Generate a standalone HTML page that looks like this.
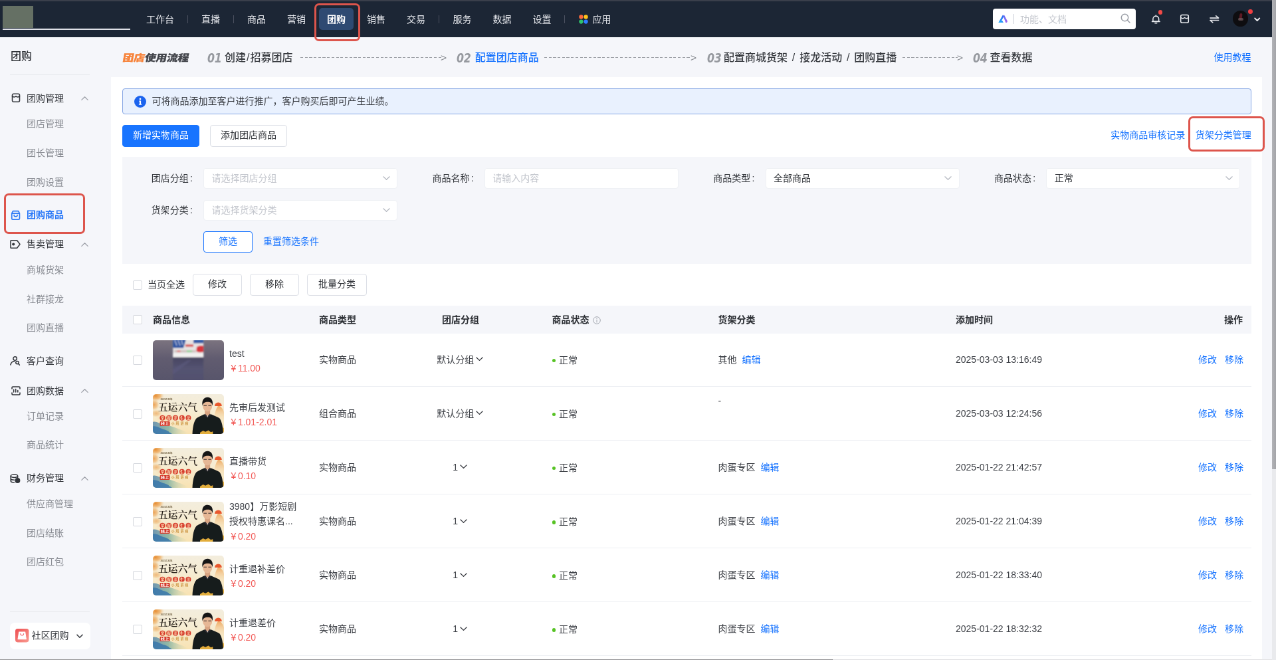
<!DOCTYPE html><html lang="zh-CN"><head><meta charset="utf-8"><title>团购商品</title><style>
*{box-sizing:border-box;margin:0;padding:0}
html,body{width:1276px;height:660px;overflow:hidden;background:#f5f6fa}
body{font-family:"Liberation Sans","Noto Sans CJK SC",sans-serif;color:#333;position:relative}
#root{will-change:transform;position:absolute;left:0;top:0;width:1920px;height:993px;transform:scale(0.664583);transform-origin:0 0;background:#f5f6fa;overflow:hidden;font-size:14px}
.t{position:absolute;white-space:nowrap;line-height:1;transform:translateY(-50%)}
.b{position:absolute}
.nav{color:#e3e5ea;font-size:14px}
.sub{color:#8a8d94;font-size:14px}
.grp{color:#34373c;font-size:14px;font-weight:400}
.blue{color:#1874ff}
.ph{color:#c3c6cd}
.th{font-weight:700;color:#2b2e33}
.red{color:#f25b58}.g{display:inline-block;width:2.6px}
.btn{border:1px solid #dcdfe6;border-radius:4px;background:#fff;display:flex;align-items:center;justify-content:center;font-size:14px;color:#2f3237;line-height:1;padding-bottom:2.4px}
.inp{border:1px solid #eef0f4;border-radius:4px;background:#fff}
.cb{border:1px solid #d5d8de;border-radius:2px;background:#fff}
.redbox{border:3px solid #dd554c;border-radius:7px}
svg{position:absolute;overflow:visible}
</style></head><body><div id="root">
<div class="b " style="left:0.00px;top:0.00px;width:1920.00px;height:56.00px;background:#1c2635"></div>
<div class="b " style="left:0.00px;top:0.00px;width:1920.00px;height:1.50px;background:#3a3f4b"></div>
<div class="b " style="left:3.80px;top:9.00px;width:45.80px;height:32.90px;background:#657064"></div>
<div class="b " style="left:3.80px;top:42.60px;width:192.40px;height:2.80px;background:#dfe1e8"></div>
<div class="t nav" style="left:220.00px;top:29.30px;">工作台</div>
<div class="t nav" style="left:303.00px;top:29.30px;">直播</div>
<div class="t nav" style="left:372.00px;top:29.30px;">商品</div>
<div class="t nav" style="left:432.00px;top:29.30px;">营销</div>
<div class="t nav" style="left:552.00px;top:29.30px;">销售</div>
<div class="t nav" style="left:612.00px;top:29.30px;">交易</div>
<div class="t nav" style="left:681.50px;top:29.30px;">服务</div>
<div class="t nav" style="left:741.50px;top:29.30px;">数据</div>
<div class="t nav" style="left:801.50px;top:29.30px;">设置</div>
<div class="t nav" style="left:891.50px;top:29.30px;">应用</div>
<div class="b " style="left:480.00px;top:12.00px;width:52.00px;height:33.00px;background:#2e4a72;border-radius:5px"></div>
<div class="t nav" style="left:492.00px;top:29.30px;color:#fff;font-weight:700">团购</div>
<div class="b " style="left:281.50px;top:22.50px;width:1.20px;height:12.00px;background:#4b5160"></div>
<div class="b " style="left:350.50px;top:22.50px;width:1.20px;height:12.00px;background:#4b5160"></div>
<div class="b " style="left:660.00px;top:22.50px;width:1.20px;height:12.00px;background:#4b5160"></div>
<div class="b " style="left:848.50px;top:22.50px;width:1.20px;height:12.00px;background:#4b5160"></div>
<svg style="left:871px;top:21.5px" width="14" height="14" viewBox="0 0 14 14"><circle cx="3.4" cy="3.4" r="3.1" fill="#ff6a3d"/><circle cx="10.6" cy="3.4" r="3.1" fill="#ffc21a"/><circle cx="3.4" cy="10.6" r="3.1" fill="#2ec36b"/><circle cx="10.6" cy="10.6" r="3.1" fill="#2f7bff"/></svg>
<div class="b " style="left:1493.60px;top:12.70px;width:215.40px;height:31.50px;background:#fff;border-radius:4px"></div>
<svg style="left:1502.4px;top:22px" width="14.3" height="12.3" viewBox="0 0 14.3 12.3"><defs><linearGradient id="lg1" x1="0" y1="1" x2=".7" y2="0"><stop offset="0" stop-color="#1fb4ff"/><stop offset="1" stop-color="#2f68ee"/></linearGradient><linearGradient id="lg1b" x1="0" y1="0" x2="1" y2="1"><stop offset="0" stop-color="#5a70f4"/><stop offset="1" stop-color="#a862ee"/></linearGradient></defs><path d="M6.9 0.4 L0.3 12 H7.9 L6.3 9.2 H4.9 L8.4 3 Z" fill="url(#lg1)"/><path d="M7.4 1.4 L9 0.6 L14 10 L13 12 H11.2 Z" fill="url(#lg1b)"/></svg>
<div class="b " style="left:1525.00px;top:21.00px;width:1.00px;height:15.00px;background:#e3e5ea"></div>
<div class="t ph" style="left:1535.00px;top:29.30px;">功能、文档</div>
<svg style="left:1685.6px;top:20.2px" width="15" height="15" viewBox="0 0 15 15" fill="none" stroke="#9a9ea6" stroke-width="1.5"><circle cx="6.5" cy="6.5" r="5.2"/><path d="M10.4 10.4 L14 14" stroke-linecap="round"/></svg>
<svg style="left:1731.6px;top:21.6px" width="14.6" height="14.6" viewBox="0 0 16 16" fill="none" stroke="#eceef2" stroke-width="1.6" stroke-linejoin="round" stroke-linecap="round"><path d="M3.2 11.2 V7.2 a4.8 4.8 0 0 1 9.6 0 V11.2 Z"/><path d="M1.6 11.4 H14.4"/><path d="M6.4 14 H9.6"/><path d="M8 1.2 V2.2"/></svg>
<div class="b " style="left:1742.60px;top:15.40px;width:6.60px;height:6.60px;background:#f24a47;border-radius:50%"></div>
<svg style="left:1775.4px;top:21.4px" width="15" height="15" viewBox="0 0 16 16" fill="none" stroke="#eceef2" stroke-width="1.6" stroke-linejoin="round"><rect x="1.8" y="1.6" width="12.4" height="12.6" rx="2.2"/><path d="M1.8 5.6 Q4.9 8.6 8 5.8 Q11.1 8.6 14.2 5.6"/></svg>
<svg style="left:1819.6px;top:22.8px" width="14.6" height="11.6" viewBox="0 0 15.6 12.4" fill="none" stroke="#e6e8ec" stroke-width="1.7" stroke-linejoin="round" stroke-linecap="round"><path d="M1 4.4 H14.6 L10.4 0.9"/><path d="M14.6 8.1 H1 L5.2 11.6"/></svg>
<div class="b " style="left:1855.10px;top:16.30px;width:23.40px;height:23.40px;background:#0e0d10;border-radius:50%;overflow:hidden"><div style="position:absolute;left:9.5px;top:4px;width:4px;height:10px;background:#5e1a24;border-radius:3px;transform:rotate(8deg)"></div><div style="position:absolute;left:7.5px;top:10.5px;width:8px;height:4.5px;background:#6d5a5c;border-radius:2px;opacity:.75"></div></div>
<div class="b " style="left:1878.40px;top:14.20px;width:6.80px;height:6.80px;background:#ee3f42;border-radius:50%"></div>
<svg style="left:1887.4px;top:25.6px" width="9.4" height="7" viewBox="0 0 9.4 7" fill="none" stroke="#f4f5f7" stroke-width="1.8" stroke-linecap="round" stroke-linejoin="round"><path d="M1.1 1.4 L4.7 5 L8.3 1.4"/></svg>
<div class="b redbox" style="left:473.20px;top:4.60px;width:69.20px;height:57.40px;"></div>
<div class="t " style="left:16.00px;top:85.30px;font-size:16px;font-weight:500;color:#2f3237">团购</div>
<div class="b " style="left:14.80px;top:112.40px;width:120.40px;height:1.00px;background:#e6e8ec"></div>
<svg style="left:16.6px;top:140.3px" width="14" height="14.5" viewBox="0 0 14 14.5" fill="none" stroke="#33363b" stroke-width="1.55" stroke-linejoin="round" stroke-linecap="round"><rect x="1.5" y="1.2" width="11" height="12.1" rx="2"/><path d="M1.5 4.6 Q4.2 7.4 7 4.8 Q9.8 7.4 12.5 4.6"/></svg>
<div class="t grp" style="left:40.00px;top:147.50px;">团购管理</div>
<svg style="left:122px;top:145px" width="11" height="6" viewBox="0 0 11 6" fill="none" stroke="#9a9da5" stroke-width="1.2" stroke-linecap="round" stroke-linejoin="round"><path d="M0.8 5.4 L5.5 0.8 L10.2 5.4"/></svg>
<div class="t sub" style="left:40.00px;top:185.90px;">团店管理</div>
<div class="t sub" style="left:40.00px;top:229.70px;">团长管理</div>
<div class="t sub" style="left:40.00px;top:273.70px;">团购设置</div>
<svg style="left:15.6px;top:316.2px" width="15.2" height="15.7" viewBox="0 0 14 14.5" fill="none" stroke="#2d7af6" stroke-width="1.55" stroke-linejoin="round" stroke-linecap="round"><path d="M1.6 4.8 L3.2 1.5 H10.8 L12.4 4.8 V11.9 a1.3 1.3 0 0 1 -1.3 1.3 H2.9 a1.3 1.3 0 0 1 -1.3 -1.3 Z M1.6 4.8 H12.4"/><path d="M4.7 6.9 a2.3 2.3 0 0 0 4.6 0"/></svg>
<div class="t grp" style="left:40.00px;top:323.20px;color:#2676f8;font-weight:700">团购商品</div>
<div class="b redbox" style="left:5.50px;top:290.90px;width:122.00px;height:61.60px;"></div>
<svg style="left:15.4px;top:361.2px" width="16" height="13" viewBox="0 0 16 13" fill="none" stroke="#33363b" stroke-width="1.55" stroke-linejoin="round" stroke-linecap="round"><path d="M1 1.6 a.8 .8 0 0 1 .8 -.8 H10.6 L15 6.5 L10.6 12.2 H1.8 a.8 .8 0 0 1 -.8 -.8 Z"/><circle cx="5.2" cy="6.5" r="2.1" fill="#33363b" stroke="none"/></svg>
<div class="t grp" style="left:40.00px;top:367.20px;">售卖管理</div>
<svg style="left:122px;top:364.8px" width="11" height="6" viewBox="0 0 11 6" fill="none" stroke="#9a9da5" stroke-width="1.2" stroke-linecap="round" stroke-linejoin="round"><path d="M0.8 5.4 L5.5 0.8 L10.2 5.4"/></svg>
<div class="t sub" style="left:40.00px;top:406.00px;">商城货架</div>
<div class="t sub" style="left:40.00px;top:449.70px;">社群接龙</div>
<div class="t sub" style="left:40.00px;top:493.40px;">团购直播</div>
<svg style="left:15.4px;top:536px" width="15" height="14" viewBox="0 0 15 14" fill="none" stroke="#33363b" stroke-width="1.55" stroke-linejoin="round" stroke-linecap="round"><circle cx="7.6" cy="3.5" r="2.7"/><path d="M0.9 13 C1.6 9.6 4 7.8 7 7.6"/><circle cx="11" cy="9.6" r="2.2"/><path d="M12.6 11.2 L14.4 13.2"/></svg>
<div class="t grp" style="left:40.00px;top:543.30px;">客户查询</div>
<svg style="left:16.5px;top:580.6px" width="14" height="14" viewBox="0 0 14 14" fill="none" stroke="#33363b" stroke-width="1.55" stroke-linejoin="round" stroke-linecap="round"><path d="M1 4 V2.2 a1.2 1.2 0 0 1 1.2 -1.2 H11.8 a1.2 1.2 0 0 1 1.2 1.2 V4 M1 10 V11.8 a1.2 1.2 0 0 0 1.2 1.2 H11.8 a1.2 1.2 0 0 0 1.2 -1.2 V10"/><path d="M3.6 5.2 V9 M6.7 4.4 V9 M9.8 6.6 V9"/></svg>
<div class="t grp" style="left:40.00px;top:587.70px;">团购数据</div>
<svg style="left:122px;top:585.3px" width="11" height="6" viewBox="0 0 11 6" fill="none" stroke="#9a9da5" stroke-width="1.2" stroke-linecap="round" stroke-linejoin="round"><path d="M0.8 5.4 L5.5 0.8 L10.2 5.4"/></svg>
<div class="t sub" style="left:40.00px;top:625.70px;">订单记录</div>
<div class="t sub" style="left:40.00px;top:669.40px;">商品统计</div>
<svg style="left:15.3px;top:712.6px" width="16" height="14" viewBox="0 0 16 14" fill="none" stroke="#33363b" stroke-width="1.55" stroke-linejoin="round" stroke-linecap="round"><ellipse cx="6.4" cy="3.2" rx="5.2" ry="2.2"/><path d="M1.2 3.2 V10.4 C1.2 11.8 3.6 12.8 6.4 12.8 M11.6 3.2 V6.4 M1.2 6.8 C1.2 8.2 3.6 9.2 6.4 9.2"/><circle cx="11.4" cy="10" r="3.2" fill="#2f3237"/></svg>
<div class="t grp" style="left:40.00px;top:719.00px;">财务管理</div>
<svg style="left:122px;top:716.6px" width="11" height="6" viewBox="0 0 11 6" fill="none" stroke="#9a9da5" stroke-width="1.2" stroke-linecap="round" stroke-linejoin="round"><path d="M0.8 5.4 L5.5 0.8 L10.2 5.4"/></svg>
<div class="t sub" style="left:40.00px;top:757.70px;">供应商管理</div>
<div class="t sub" style="left:40.00px;top:801.70px;">团店结账</div>
<div class="t sub" style="left:40.00px;top:845.40px;">团店红包</div>
<div class="b " style="left:14.80px;top:920.30px;width:120.40px;height:1.00px;background:#e8eaee"></div>
<div class="b " style="left:15.20px;top:936.60px;width:121.00px;height:40.60px;background:#fff;border-radius:7px"></div>
<svg style="left:22.8px;top:946.3px" width="20.4" height="20.4" viewBox="0 0 20 20"><defs><linearGradient id="lg2" x1="0" y1="0" x2="1" y2="1"><stop offset="0" stop-color="#ee4f52"/><stop offset="1" stop-color="#f99a90"/></linearGradient></defs><rect width="20" height="20" rx="3.5" fill="url(#lg2)"/><path d="M5.6 4.8 H14.4 L16 15.4 H4 Z" fill="#fff" stroke="#fff" stroke-width="1" stroke-linejoin="round"/><path d="M7.6 7.4 a2.4 2.4 0 0 0 4.8 0" fill="none" stroke="#f2606a" stroke-width="1.1" stroke-linecap="round"/></svg>
<div class="t grp" style="left:47.50px;top:956.20px;">社区团购</div>
<svg style="left:114.5px;top:953.5px" width="10" height="7" viewBox="0 0 10 7" fill="none" stroke="#3a3d43" stroke-width="1.6" stroke-linecap="round" stroke-linejoin="round"><path d="M1 1.2 L5 5.2 L9 1.2"/></svg>
<div class="t" style="left:185px;top:87.3px;font-family:'Liberation Sans','Noto Sans CJK SC',sans-serif;font-weight:900;font-size:14px;transform-origin:0 50%;transform:translateY(-50%) scaleX(1.19) skewX(-9deg);color:#43454b;letter-spacing:-0.1px;-webkit-text-stroke:.3px currentColor"><span style="color:#f7833a">团店</span>使用流程</div>
<div class="t" style="left:311.5px;top:87.6px;font-family:'DejaVu Sans','Liberation Sans',sans-serif;font-size:19.6px;font-style:italic;font-weight:700;color:#96999f;letter-spacing:-0.4px;transform-origin:0 50%;transform:translateY(-50%) scaleX(.81)">01</div>
<div class="t " style="left:338.00px;top:87.40px;font-size:16px;font-weight:500;color:#383b40">创建<span style="padding:0 1px">/</span>招募团店</div>
<div class="b " style="left:452.00px;top:85.70px;width:212.00px;height:1.50px;background:repeating-linear-gradient(90deg,#9b9ea4 0 4.2px,transparent 4.2px 6.7px)"></div>
<div class="t " style="left:663.40px;top:86.00px;font-size:15px;color:#85888e;transform:translateY(-50%) scaleX(1.05);transform-origin:0 50%">&gt;</div>
<div class="t" style="left:687.0px;top:87.6px;font-family:'DejaVu Sans','Liberation Sans',sans-serif;font-size:19.6px;font-style:italic;font-weight:700;color:#96999f;letter-spacing:-0.4px;transform-origin:0 50%;transform:translateY(-50%) scaleX(.81)">02</div>
<div class="t " style="left:714.70px;top:87.40px;font-size:16px;font-weight:500;color:#1874ff">配置团店商品</div>
<div class="b " style="left:819.00px;top:85.70px;width:220.50px;height:1.50px;background:repeating-linear-gradient(90deg,#9b9ea4 0 4.2px,transparent 4.2px 6.7px)"></div>
<div class="t " style="left:1038.90px;top:86.00px;font-size:15px;color:#85888e;transform:translateY(-50%) scaleX(1.05);transform-origin:0 50%">&gt;</div>
<div class="t" style="left:1063.5px;top:87.6px;font-family:'DejaVu Sans','Liberation Sans',sans-serif;font-size:19.6px;font-style:italic;font-weight:700;color:#96999f;letter-spacing:-0.4px;transform-origin:0 50%;transform:translateY(-50%) scaleX(.81)">03</div>
<div class="t " style="left:1089.00px;top:87.40px;font-size:16px;font-weight:500;color:#383b40;word-spacing:2.4px">配置商城货架 / 接龙活动 / 团购直播</div>
<div class="b " style="left:1358.00px;top:85.70px;width:83.00px;height:1.50px;background:repeating-linear-gradient(90deg,#9b9ea4 0 4.2px,transparent 4.2px 6.7px)"></div>
<div class="t " style="left:1440.40px;top:86.00px;font-size:15px;color:#85888e;transform:translateY(-50%) scaleX(1.05);transform-origin:0 50%">&gt;</div>
<div class="t" style="left:1463.5px;top:87.6px;font-family:'DejaVu Sans','Liberation Sans',sans-serif;font-size:19.6px;font-style:italic;font-weight:700;color:#96999f;letter-spacing:-0.4px;transform-origin:0 50%;transform:translateY(-50%) scaleX(.81)">04</div>
<div class="t " style="left:1489.60px;top:87.40px;font-size:16px;font-weight:500;color:#383b40">查看数据</div>
<div class="t blue" style="left:1826.40px;top:86.20px;">使用教程</div>
<div class="b " style="left:167.00px;top:116.00px;width:1732.00px;height:900.00px;background:#fff"></div>
<div class="b " style="left:184.00px;top:132.60px;width:1699.00px;height:39.60px;background:#e9f1fe;border:1.5px solid #86a6e4;border-radius:4px"></div>
<svg style="left:201.5px;top:143.6px" width="18" height="18" viewBox="0 0 18 18"><circle cx="9" cy="9" r="9" fill="#1b63ee"/><circle cx="9" cy="4.9" r="1.35" fill="#fff"/><path d="M7.2 7.6 H10.1 V12.6 H11.2 V13.8 H6.9 V12.6 H8 V8.8 H7.2 Z" fill="#fff"/></svg>
<div class="t " style="left:228.60px;top:151.50px;color:#3a3d43">可将商品添加至客户进行推广，客户购买后即可产生业绩。</div>
<div class="b btn" style="left:184.00px;top:188.10px;width:116.00px;height:32.50px;background:#1874ff;border-color:#1874ff;color:#fff">新增实物商品</div>
<div class="b btn" style="left:316.00px;top:188.10px;width:116.00px;height:32.50px;">添加团店商品</div>
<div class="t blue" style="left:1671.20px;top:203.40px;">实物商品审核记录</div>
<div class="t blue" style="left:1798.70px;top:203.40px;">货架分类管理</div>
<div class="b redbox" style="left:1787.50px;top:175.30px;width:115.60px;height:52.60px;"></div>
<div class="b " style="left:184.00px;top:236.00px;width:1699.00px;height:161.00px;background:#f5f6fa"></div>
<div class="t " style="right:1630.00px;top:267.80px;color:#34373c">团店分组<span style="padding-left:2.4px">:</span></div>
<div class="b inp" style="left:306.00px;top:253.40px;width:292.00px;height:30.30px;"></div>
<div class="t ph" style="left:318.60px;top:267.80px;">请选择团店分组</div>
<svg style="left:575.5px;top:265.3px" width="11" height="6" viewBox="0 0 11 6" fill="none" stroke="#b4b8c0" stroke-width="1.2" stroke-linecap="round" stroke-linejoin="round"><path d="M0.8 0.8 L5.5 5.3 L10.2 0.8"/></svg>
<div class="t " style="right:1207.25px;top:267.80px;color:#34373c">商品名称<span style="padding-left:2.4px">:</span></div>
<div class="b inp" style="left:728.75px;top:253.40px;width:292.00px;height:30.30px;"></div>
<div class="t ph" style="left:741.35px;top:267.80px;">请输入内容</div>
<div class="t " style="right:784.50px;top:267.80px;color:#34373c">商品类型<span style="padding-left:2.4px">:</span></div>
<div class="b inp" style="left:1151.50px;top:253.40px;width:292.00px;height:30.30px;"></div>
<div class="t " style="left:1164.10px;top:267.80px;color:#2f3237">全部商品</div>
<svg style="left:1421.0px;top:265.3px" width="11" height="6" viewBox="0 0 11 6" fill="none" stroke="#b4b8c0" stroke-width="1.2" stroke-linecap="round" stroke-linejoin="round"><path d="M0.8 0.8 L5.5 5.3 L10.2 0.8"/></svg>
<div class="t " style="right:361.75px;top:267.80px;color:#34373c">商品状态<span style="padding-left:2.4px">:</span></div>
<div class="b inp" style="left:1574.25px;top:253.40px;width:292.00px;height:30.30px;"></div>
<div class="t " style="left:1586.85px;top:267.80px;color:#2f3237">正常</div>
<svg style="left:1843.75px;top:265.3px" width="11" height="6" viewBox="0 0 11 6" fill="none" stroke="#b4b8c0" stroke-width="1.2" stroke-linecap="round" stroke-linejoin="round"><path d="M0.8 0.8 L5.5 5.3 L10.2 0.8"/></svg>
<div class="t " style="right:1630.00px;top:315.80px;color:#34373c">货架分类<span style="padding-left:2.4px">:</span></div>
<div class="b inp" style="left:306.00px;top:301.40px;width:292.00px;height:30.30px;"></div>
<div class="t ph" style="left:318.60px;top:315.80px;">请选择货架分类</div>
<svg style="left:575.5px;top:313.3px" width="11" height="6" viewBox="0 0 11 6" fill="none" stroke="#b4b8c0" stroke-width="1.2" stroke-linecap="round" stroke-linejoin="round"><path d="M0.8 0.8 L5.5 5.3 L10.2 0.8"/></svg>
<div class="b btn" style="left:306.00px;top:348.00px;width:74.00px;height:32.00px;border-color:#1874ff;color:#1874ff">筛选</div>
<div class="t blue" style="left:396.00px;top:363.20px;">重置筛选条件</div>
<div class="b cb" style="left:200.00px;top:421.50px;width:14.00px;height:14.00px;"></div>
<div class="t " style="left:222.00px;top:427.50px;color:#2f3237">当页全选</div>
<div class="b btn" style="left:290.00px;top:412.20px;width:74.00px;height:32.50px;">修改</div>
<div class="b btn" style="left:376.00px;top:412.20px;width:74.00px;height:32.50px;">移除</div>
<div class="b btn" style="left:462.00px;top:412.20px;width:90.00px;height:32.50px;">批量分类</div>
<div class="b " style="left:184.00px;top:460.00px;width:1699.00px;height:42.00px;background:#f5f6fa"></div>
<div class="b cb" style="left:200.00px;top:474.00px;width:14.00px;height:14.00px;"></div>
<div class="t th" style="left:230.00px;top:480.50px;">商品信息</div>
<div class="t th" style="left:480.00px;top:480.50px;">商品类型</div>
<div class="t th" style="left:665.00px;top:480.50px;">团店分组</div>
<div class="t th" style="left:830.50px;top:480.50px;">商品状态</div>
<svg style="left:891.5px;top:475.5px" width="12" height="12" viewBox="0 0 12 12" fill="none" stroke="#a4a8b0" stroke-width="1"><circle cx="6" cy="6" r="5.3"/><path d="M6 5.2 V9" stroke-linecap="round"/><circle cx="6" cy="3.3" r=".7" fill="#a4a8b0" stroke="none"/></svg>
<div class="t th" style="left:1080.50px;top:480.50px;">货架分类</div>
<div class="t th" style="left:1438.00px;top:480.50px;">添加时间</div>
<div class="t th" style="right:50.00px;top:480.50px;">操作</div>
<div class="b " style="left:184.00px;top:581.00px;width:1699.00px;height:1.00px;background:#edeff3"></div>
<div class="b cb" style="left:200.00px;top:534.50px;width:14.00px;height:14.00px;"></div>
<div class="b " style="left:229.60px;top:511.90px;width:107.00px;height:60.00px;border-radius:5px;overflow:hidden"><svg width="107" height="60" viewBox="0 0 107 60" style="position:absolute;left:0;top:0">
<defs><linearGradient id="t1a" x1="0" y1="0" x2="0" y2="1"><stop offset="0" stop-color="#7b737f"/><stop offset=".45" stop-color="#615c70"/><stop offset="1" stop-color="#58556b"/></linearGradient>
<linearGradient id="t1b" x1="0" y1="0" x2="0" y2="1"><stop offset="0" stop-color="#46445e"/><stop offset=".5" stop-color="#545372"/><stop offset="1" stop-color="#51506d"/></linearGradient>
<filter id="t1f" x="-5%" y="-5%" width="110%" height="110%"><feGaussianBlur stdDeviation=".8"/></filter></defs>
<rect width="107" height="60" fill="url(#t1a)"/>
<g filter="url(#t1f)">
<rect x="30.2" y="23" width="46" height="39" fill="url(#t1b)"/>
<path d="M30.2 44 L52 30 L58 30 L30.2 52 Z" fill="#5c5b80" opacity=".55"/>
<rect x="30.2" y="-2" width="46" height="27.4" fill="#e6e3e3"/>
<path d="M30.2 -2 H50 L46 11.5 H30.2 Z" fill="#2a52a0"/><rect x="61" y="-2" width="15.2" height="6.4" fill="#3059a6"/>
<path d="M33 0 l3 8 M38 0 l3 8 M43 0 l2 7" stroke="#c9d3ea" stroke-width="1.1"/>
<rect x="49" y="6.4" width="12" height="3.2" fill="#d8484a"/>
<path d="M66 10 Q71 7 76.2 8.6 V17.6 Q70 19.4 65.4 16.4 Z" fill="#d9363c"/>
<rect x="32.5" y="15.3" width="32" height="2.6" fill="#cbbcb8"/><rect x="51" y="15.3" width="8" height="2.6" fill="#8fd494"/><rect x="36.5" y="15.3" width="5" height="2.6" fill="#e27878"/>
<rect x="30.2" y="19.6" width="46" height="5.8" fill="#f3f2f1"/>
</g>
</svg></div>
<div class="t " style="left:345.00px;top:532.20px;color:#3c3f45">test</div>
<div class="t red" style="left:347.50px;top:553.60px;">¥<i class="g"></i>11.00</div>
<div class="t " style="left:480.00px;top:540.70px;color:#3c3f45">实物商品</div>
<div class="t" style="left:592px;width:200px;text-align:center;top:541.0px;color:#3c3f45">默认分组<svg style="position:static;display:inline-block;vertical-align:middle;margin-left:2.5px;margin-top:-3px" width="11" height="7" viewBox="0 0 11 7" fill="none" stroke="#33363c" stroke-width="1.3" stroke-linecap="round" stroke-linejoin="round"><path d="M1 1 L5.5 5.4 L10 1"/></svg></div>
<div class="b " style="left:830.50px;top:539.90px;width:5.40px;height:5.40px;background:#56c223;border-radius:50%"></div>
<div class="t " style="left:841.00px;top:541.90px;color:#3c3f45">正常</div>
<div class="t " style="left:1080.50px;top:540.70px;color:#3c3f45">其他<span class="blue" style="margin-left:8px">编辑</span></div>
<div class="t " style="left:1438.00px;top:540.70px;color:#3c3f45">2025-03-03 13:16:49</div>
<div class="t blue" style="left:1803.00px;top:540.70px;">修改</div>
<div class="t blue" style="left:1843.00px;top:540.70px;">移除</div>
<div class="b " style="left:184.00px;top:662.10px;width:1699.00px;height:1.00px;background:#edeff3"></div>
<div class="b cb" style="left:200.00px;top:615.60px;width:14.00px;height:14.00px;"></div>
<div class="b " style="left:229.60px;top:593.00px;width:107.00px;height:60.00px;border-radius:5px;overflow:hidden"><svg width="107" height="60" viewBox="0 0 107 60" style="position:absolute;left:0;top:0">
<defs><linearGradient id="p1a" x1="0" y1="0" x2="0" y2="1"><stop offset="0" stop-color="#f3eddd"/><stop offset=".45" stop-color="#f6ecd2"/><stop offset="1" stop-color="#f8e2b2"/></linearGradient>
<linearGradient id="p1w" x1="0" y1="0" x2="1" y2="0"><stop offset="0" stop-color="#3774a8"/><stop offset=".42" stop-color="#66a69c"/><stop offset="1" stop-color="#e4e4bc" stop-opacity="0"/></linearGradient>
<linearGradient id="p1m" x1="0" y1="0" x2="0" y2="1"><stop offset="0" stop-color="#ee9744"/><stop offset="1" stop-color="#f6dca8" stop-opacity=".15"/></linearGradient>
<radialGradient id="p1o"><stop offset="0" stop-color="#e88d33"/><stop offset=".55" stop-color="#eda95a" stop-opacity=".75"/><stop offset="1" stop-color="#f2c88e" stop-opacity="0"/></radialGradient>
<filter id="p1f" x="-5%" y="-5%" width="110%" height="110%"><feGaussianBlur stdDeviation=".4"/></filter></defs>
<rect width="107" height="60" fill="url(#p1a)"/>
<g filter="url(#p1f)">
<ellipse cx="4" cy="2.5" rx="13" ry="8.5" fill="url(#p1o)"/>
<ellipse cx="2" cy="16" rx="8" ry="9" fill="url(#p1o)" opacity=".75"/>
<ellipse cx="5" cy="29" rx="9" ry="6" fill="url(#p1o)" opacity=".55"/>
<ellipse cx="20" cy="36" rx="16" ry="5" fill="url(#p1o)" opacity=".3"/>
<path d="M0 42 C5 40 10 45 18 46 C28 47.5 36 52 46 55 L56 60 H0 Z" fill="url(#p1w)" opacity=".7"/>
<path d="M0 48.5 C6 47 11 52 18 53.5 C23 55 26 58 29 60 H0 Z" fill="#3a78ab" opacity=".85"/>
<path d="M92 36 C93.5 27 96 19 98.8 17.6 C103 18.4 106 23 107 28 V40 H92 Z" fill="url(#p1m)" opacity=".8"/>
<path d="M93 17.9 A5.4 5.4 0 0 1 103.8 17.9 Z" fill="#e9592f"/>
<path d="M95 52 C99 48.5 103 49 107 51 V60 H93 Z" fill="#ebb444"/>
<text x="11.4" y="9.5" font-size="3.5" font-weight="700" fill="#7a6a4c" font-family="Liberation Sans,Noto Sans CJK SC,sans-serif">2025乙巳年</text>
<text x="8" y="25.4" font-size="14.4" font-weight="600" fill="#241c16" font-family="Liberation Serif,Noto Serif CJK SC,serif" textLength="59" lengthAdjust="spacingAndGlyphs">五运六气</text>
<g fill="#d63a2c"><circle cx="14.4" cy="35.7" r="4"/><circle cx="24.2" cy="35.7" r="4"/><circle cx="34" cy="35.7" r="4"/><circle cx="43.8" cy="35.7" r="4"/><circle cx="53.4" cy="35.7" r="4"/></g>
<g font-size="5.4" font-weight="700" fill="#ffe6bc" font-family="Liberation Serif,Noto Serif CJK SC,serif" text-anchor="middle"><text x="14.4" y="37.7">掌</text><text x="24.2" y="37.7">握</text><text x="34" y="37.7">养</text><text x="43.8" y="37.7">生</text><text x="53.4" y="37.7">法</text></g>
<rect x="10.6" y="40.9" width="15.2" height="7" rx="1" fill="#d43a2c"/>
<text x="11.6" y="46.4" font-size="5" font-weight="700" fill="#fff" font-family="Liberation Sans,Noto Sans CJK SC,sans-serif" textLength="13" lengthAdjust="spacingAndGlyphs">线上</text>
<text x="27.4" y="46.5" font-size="5.2" font-weight="700" fill="#c78a30" font-family="Liberation Serif,Noto Serif CJK SC,serif" textLength="26" lengthAdjust="spacing">小班讲座</text>
<path d="M59.5 60 C60 50 61.5 41.5 65.5 36.6 C68 34 73 32.6 77 30.4 H88 C92 32.6 98 34 100.5 36.6 C104 41.5 105.5 50 106 60 Z" fill="#191a1d"/>
<path d="M78.2 23 H86.2 V30.6 L82.2 34 L78.2 30.6 Z" fill="#d8a482"/>
<ellipse cx="82.2" cy="17.6" rx="7.1" ry="8.7" fill="#e6b795"/>
<path d="M74.6 17.4 C73.2 8.2 77.6 4.6 82.4 4.7 C88 4.9 91 9.4 89.8 17.4 C88.9 13 86.6 11.6 82.4 11.7 C78.4 11.8 75.7 13.2 74.6 17.4 Z" fill="#151517"/>
<path d="M76.4 17.2 H81 M83.4 17.2 H88" stroke="#3a2e2a" stroke-width="1.1" fill="none"/>
<path d="M78.4 29.6 L82.2 33.4 L86 29.6 L87 32 L82.2 36 L77.4 32 Z" fill="#2b2c30"/>
<path d="M81.2 32.6 L82.2 34.8 L83.2 32.6 Z" fill="#f1ede6"/>
<path d="M71 58 l4.5 -3 l3.6 1.8 l4.4 -2.2 l3.8 2.6 l3 -1 v3.8 h-19.3 Z" fill="#e2ad3a"/>
</g>
</svg></div>
<div class="t " style="left:345.00px;top:612.80px;color:#3c3f45">先审后发测试</div>
<div class="t red" style="left:347.50px;top:634.70px;">¥<i class="g"></i>1.01-2.01</div>
<div class="t " style="left:480.00px;top:621.80px;color:#3c3f45">组合商品</div>
<div class="t" style="left:592px;width:200px;text-align:center;top:622.1px;color:#3c3f45">默认分组<svg style="position:static;display:inline-block;vertical-align:middle;margin-left:2.5px;margin-top:-3px" width="11" height="7" viewBox="0 0 11 7" fill="none" stroke="#33363c" stroke-width="1.3" stroke-linecap="round" stroke-linejoin="round"><path d="M1 1 L5.5 5.4 L10 1"/></svg></div>
<div class="b " style="left:830.50px;top:621.00px;width:5.40px;height:5.40px;background:#56c223;border-radius:50%"></div>
<div class="t " style="left:841.00px;top:623.00px;color:#3c3f45">正常</div>
<div class="t " style="left:1080.50px;top:602.80px;color:#3c3f45">-</div>
<div class="t " style="left:1438.00px;top:621.80px;color:#3c3f45">2025-03-03 12:24:56</div>
<div class="t blue" style="left:1803.00px;top:621.80px;">修改</div>
<div class="t blue" style="left:1843.00px;top:621.80px;">移除</div>
<div class="b " style="left:184.00px;top:743.20px;width:1699.00px;height:1.00px;background:#edeff3"></div>
<div class="b cb" style="left:200.00px;top:696.70px;width:14.00px;height:14.00px;"></div>
<div class="b " style="left:229.60px;top:674.10px;width:107.00px;height:60.00px;border-radius:5px;overflow:hidden"><svg width="107" height="60" viewBox="0 0 107 60" style="position:absolute;left:0;top:0">
<defs><linearGradient id="p2a" x1="0" y1="0" x2="0" y2="1"><stop offset="0" stop-color="#f3eddd"/><stop offset=".45" stop-color="#f6ecd2"/><stop offset="1" stop-color="#f8e2b2"/></linearGradient>
<linearGradient id="p2w" x1="0" y1="0" x2="1" y2="0"><stop offset="0" stop-color="#3774a8"/><stop offset=".42" stop-color="#66a69c"/><stop offset="1" stop-color="#e4e4bc" stop-opacity="0"/></linearGradient>
<linearGradient id="p2m" x1="0" y1="0" x2="0" y2="1"><stop offset="0" stop-color="#ee9744"/><stop offset="1" stop-color="#f6dca8" stop-opacity=".15"/></linearGradient>
<radialGradient id="p2o"><stop offset="0" stop-color="#e88d33"/><stop offset=".55" stop-color="#eda95a" stop-opacity=".75"/><stop offset="1" stop-color="#f2c88e" stop-opacity="0"/></radialGradient>
<filter id="p2f" x="-5%" y="-5%" width="110%" height="110%"><feGaussianBlur stdDeviation=".4"/></filter></defs>
<rect width="107" height="60" fill="url(#p2a)"/>
<g filter="url(#p2f)">
<ellipse cx="4" cy="2.5" rx="13" ry="8.5" fill="url(#p2o)"/>
<ellipse cx="2" cy="16" rx="8" ry="9" fill="url(#p2o)" opacity=".75"/>
<ellipse cx="5" cy="29" rx="9" ry="6" fill="url(#p2o)" opacity=".55"/>
<ellipse cx="20" cy="36" rx="16" ry="5" fill="url(#p2o)" opacity=".3"/>
<path d="M0 42 C5 40 10 45 18 46 C28 47.5 36 52 46 55 L56 60 H0 Z" fill="url(#p2w)" opacity=".7"/>
<path d="M0 48.5 C6 47 11 52 18 53.5 C23 55 26 58 29 60 H0 Z" fill="#3a78ab" opacity=".85"/>
<path d="M92 36 C93.5 27 96 19 98.8 17.6 C103 18.4 106 23 107 28 V40 H92 Z" fill="url(#p2m)" opacity=".8"/>
<path d="M93 17.9 A5.4 5.4 0 0 1 103.8 17.9 Z" fill="#e9592f"/>
<path d="M95 52 C99 48.5 103 49 107 51 V60 H93 Z" fill="#ebb444"/>
<text x="11.4" y="9.5" font-size="3.5" font-weight="700" fill="#7a6a4c" font-family="Liberation Sans,Noto Sans CJK SC,sans-serif">2025乙巳年</text>
<text x="8" y="25.4" font-size="14.4" font-weight="600" fill="#241c16" font-family="Liberation Serif,Noto Serif CJK SC,serif" textLength="59" lengthAdjust="spacingAndGlyphs">五运六气</text>
<g fill="#d63a2c"><circle cx="14.4" cy="35.7" r="4"/><circle cx="24.2" cy="35.7" r="4"/><circle cx="34" cy="35.7" r="4"/><circle cx="43.8" cy="35.7" r="4"/><circle cx="53.4" cy="35.7" r="4"/></g>
<g font-size="5.4" font-weight="700" fill="#ffe6bc" font-family="Liberation Serif,Noto Serif CJK SC,serif" text-anchor="middle"><text x="14.4" y="37.7">掌</text><text x="24.2" y="37.7">握</text><text x="34" y="37.7">养</text><text x="43.8" y="37.7">生</text><text x="53.4" y="37.7">法</text></g>
<rect x="10.6" y="40.9" width="15.2" height="7" rx="1" fill="#d43a2c"/>
<text x="11.6" y="46.4" font-size="5" font-weight="700" fill="#fff" font-family="Liberation Sans,Noto Sans CJK SC,sans-serif" textLength="13" lengthAdjust="spacingAndGlyphs">线上</text>
<text x="27.4" y="46.5" font-size="5.2" font-weight="700" fill="#c78a30" font-family="Liberation Serif,Noto Serif CJK SC,serif" textLength="26" lengthAdjust="spacing">小班讲座</text>
<path d="M59.5 60 C60 50 61.5 41.5 65.5 36.6 C68 34 73 32.6 77 30.4 H88 C92 32.6 98 34 100.5 36.6 C104 41.5 105.5 50 106 60 Z" fill="#191a1d"/>
<path d="M78.2 23 H86.2 V30.6 L82.2 34 L78.2 30.6 Z" fill="#d8a482"/>
<ellipse cx="82.2" cy="17.6" rx="7.1" ry="8.7" fill="#e6b795"/>
<path d="M74.6 17.4 C73.2 8.2 77.6 4.6 82.4 4.7 C88 4.9 91 9.4 89.8 17.4 C88.9 13 86.6 11.6 82.4 11.7 C78.4 11.8 75.7 13.2 74.6 17.4 Z" fill="#151517"/>
<path d="M76.4 17.2 H81 M83.4 17.2 H88" stroke="#3a2e2a" stroke-width="1.1" fill="none"/>
<path d="M78.4 29.6 L82.2 33.4 L86 29.6 L87 32 L82.2 36 L77.4 32 Z" fill="#2b2c30"/>
<path d="M81.2 32.6 L82.2 34.8 L83.2 32.6 Z" fill="#f1ede6"/>
<path d="M71 58 l4.5 -3 l3.6 1.8 l4.4 -2.2 l3.8 2.6 l3 -1 v3.8 h-19.3 Z" fill="#e2ad3a"/>
</g>
</svg></div>
<div class="t " style="left:345.00px;top:693.90px;color:#3c3f45">直播带货</div>
<div class="t red" style="left:347.50px;top:715.80px;">¥<i class="g"></i>0.10</div>
<div class="t " style="left:480.00px;top:702.90px;color:#3c3f45">实物商品</div>
<div class="t" style="left:592px;width:200px;text-align:center;top:703.2px;color:#3c3f45">1<svg style="position:static;display:inline-block;vertical-align:middle;margin-left:2.5px;margin-top:-3px" width="11" height="7" viewBox="0 0 11 7" fill="none" stroke="#33363c" stroke-width="1.3" stroke-linecap="round" stroke-linejoin="round"><path d="M1 1 L5.5 5.4 L10 1"/></svg></div>
<div class="b " style="left:830.50px;top:702.10px;width:5.40px;height:5.40px;background:#56c223;border-radius:50%"></div>
<div class="t " style="left:841.00px;top:704.10px;color:#3c3f45">正常</div>
<div class="t " style="left:1080.50px;top:702.90px;color:#3c3f45">肉蛋专区<span class="blue" style="margin-left:8px">编辑</span></div>
<div class="t " style="left:1438.00px;top:702.90px;color:#3c3f45">2025-01-22 21:42:57</div>
<div class="t blue" style="left:1803.00px;top:702.90px;">修改</div>
<div class="t blue" style="left:1843.00px;top:702.90px;">移除</div>
<div class="b " style="left:184.00px;top:824.30px;width:1699.00px;height:1.00px;background:#edeff3"></div>
<div class="b cb" style="left:200.00px;top:777.80px;width:14.00px;height:14.00px;"></div>
<div class="b " style="left:229.60px;top:755.20px;width:107.00px;height:60.00px;border-radius:5px;overflow:hidden"><svg width="107" height="60" viewBox="0 0 107 60" style="position:absolute;left:0;top:0">
<defs><linearGradient id="p3a" x1="0" y1="0" x2="0" y2="1"><stop offset="0" stop-color="#f3eddd"/><stop offset=".45" stop-color="#f6ecd2"/><stop offset="1" stop-color="#f8e2b2"/></linearGradient>
<linearGradient id="p3w" x1="0" y1="0" x2="1" y2="0"><stop offset="0" stop-color="#3774a8"/><stop offset=".42" stop-color="#66a69c"/><stop offset="1" stop-color="#e4e4bc" stop-opacity="0"/></linearGradient>
<linearGradient id="p3m" x1="0" y1="0" x2="0" y2="1"><stop offset="0" stop-color="#ee9744"/><stop offset="1" stop-color="#f6dca8" stop-opacity=".15"/></linearGradient>
<radialGradient id="p3o"><stop offset="0" stop-color="#e88d33"/><stop offset=".55" stop-color="#eda95a" stop-opacity=".75"/><stop offset="1" stop-color="#f2c88e" stop-opacity="0"/></radialGradient>
<filter id="p3f" x="-5%" y="-5%" width="110%" height="110%"><feGaussianBlur stdDeviation=".4"/></filter></defs>
<rect width="107" height="60" fill="url(#p3a)"/>
<g filter="url(#p3f)">
<ellipse cx="4" cy="2.5" rx="13" ry="8.5" fill="url(#p3o)"/>
<ellipse cx="2" cy="16" rx="8" ry="9" fill="url(#p3o)" opacity=".75"/>
<ellipse cx="5" cy="29" rx="9" ry="6" fill="url(#p3o)" opacity=".55"/>
<ellipse cx="20" cy="36" rx="16" ry="5" fill="url(#p3o)" opacity=".3"/>
<path d="M0 42 C5 40 10 45 18 46 C28 47.5 36 52 46 55 L56 60 H0 Z" fill="url(#p3w)" opacity=".7"/>
<path d="M0 48.5 C6 47 11 52 18 53.5 C23 55 26 58 29 60 H0 Z" fill="#3a78ab" opacity=".85"/>
<path d="M92 36 C93.5 27 96 19 98.8 17.6 C103 18.4 106 23 107 28 V40 H92 Z" fill="url(#p3m)" opacity=".8"/>
<path d="M93 17.9 A5.4 5.4 0 0 1 103.8 17.9 Z" fill="#e9592f"/>
<path d="M95 52 C99 48.5 103 49 107 51 V60 H93 Z" fill="#ebb444"/>
<text x="11.4" y="9.5" font-size="3.5" font-weight="700" fill="#7a6a4c" font-family="Liberation Sans,Noto Sans CJK SC,sans-serif">2025乙巳年</text>
<text x="8" y="25.4" font-size="14.4" font-weight="600" fill="#241c16" font-family="Liberation Serif,Noto Serif CJK SC,serif" textLength="59" lengthAdjust="spacingAndGlyphs">五运六气</text>
<g fill="#d63a2c"><circle cx="14.4" cy="35.7" r="4"/><circle cx="24.2" cy="35.7" r="4"/><circle cx="34" cy="35.7" r="4"/><circle cx="43.8" cy="35.7" r="4"/><circle cx="53.4" cy="35.7" r="4"/></g>
<g font-size="5.4" font-weight="700" fill="#ffe6bc" font-family="Liberation Serif,Noto Serif CJK SC,serif" text-anchor="middle"><text x="14.4" y="37.7">掌</text><text x="24.2" y="37.7">握</text><text x="34" y="37.7">养</text><text x="43.8" y="37.7">生</text><text x="53.4" y="37.7">法</text></g>
<rect x="10.6" y="40.9" width="15.2" height="7" rx="1" fill="#d43a2c"/>
<text x="11.6" y="46.4" font-size="5" font-weight="700" fill="#fff" font-family="Liberation Sans,Noto Sans CJK SC,sans-serif" textLength="13" lengthAdjust="spacingAndGlyphs">线上</text>
<text x="27.4" y="46.5" font-size="5.2" font-weight="700" fill="#c78a30" font-family="Liberation Serif,Noto Serif CJK SC,serif" textLength="26" lengthAdjust="spacing">小班讲座</text>
<path d="M59.5 60 C60 50 61.5 41.5 65.5 36.6 C68 34 73 32.6 77 30.4 H88 C92 32.6 98 34 100.5 36.6 C104 41.5 105.5 50 106 60 Z" fill="#191a1d"/>
<path d="M78.2 23 H86.2 V30.6 L82.2 34 L78.2 30.6 Z" fill="#d8a482"/>
<ellipse cx="82.2" cy="17.6" rx="7.1" ry="8.7" fill="#e6b795"/>
<path d="M74.6 17.4 C73.2 8.2 77.6 4.6 82.4 4.7 C88 4.9 91 9.4 89.8 17.4 C88.9 13 86.6 11.6 82.4 11.7 C78.4 11.8 75.7 13.2 74.6 17.4 Z" fill="#151517"/>
<path d="M76.4 17.2 H81 M83.4 17.2 H88" stroke="#3a2e2a" stroke-width="1.1" fill="none"/>
<path d="M78.4 29.6 L82.2 33.4 L86 29.6 L87 32 L82.2 36 L77.4 32 Z" fill="#2b2c30"/>
<path d="M81.2 32.6 L82.2 34.8 L83.2 32.6 Z" fill="#f1ede6"/>
<path d="M71 58 l4.5 -3 l3.6 1.8 l4.4 -2.2 l3.8 2.6 l3 -1 v3.8 h-19.3 Z" fill="#e2ad3a"/>
</g>
</svg></div>
<div class="t " style="left:345.00px;top:762.00px;color:#3c3f45">3980】万影短剧</div>
<div class="t " style="left:345.00px;top:784.00px;color:#3c3f45">授权特惠课名...</div>
<div class="t red" style="left:347.50px;top:806.80px;">¥<i class="g"></i>0.20</div>
<div class="t " style="left:480.00px;top:784.00px;color:#3c3f45">实物商品</div>
<div class="t" style="left:592px;width:200px;text-align:center;top:784.3px;color:#3c3f45">1<svg style="position:static;display:inline-block;vertical-align:middle;margin-left:2.5px;margin-top:-3px" width="11" height="7" viewBox="0 0 11 7" fill="none" stroke="#33363c" stroke-width="1.3" stroke-linecap="round" stroke-linejoin="round"><path d="M1 1 L5.5 5.4 L10 1"/></svg></div>
<div class="b " style="left:830.50px;top:783.20px;width:5.40px;height:5.40px;background:#56c223;border-radius:50%"></div>
<div class="t " style="left:841.00px;top:785.20px;color:#3c3f45">正常</div>
<div class="t " style="left:1080.50px;top:784.00px;color:#3c3f45">肉蛋专区<span class="blue" style="margin-left:8px">编辑</span></div>
<div class="t " style="left:1438.00px;top:784.00px;color:#3c3f45">2025-01-22 21:04:39</div>
<div class="t blue" style="left:1803.00px;top:784.00px;">修改</div>
<div class="t blue" style="left:1843.00px;top:784.00px;">移除</div>
<div class="b " style="left:184.00px;top:905.40px;width:1699.00px;height:1.00px;background:#edeff3"></div>
<div class="b cb" style="left:200.00px;top:858.90px;width:14.00px;height:14.00px;"></div>
<div class="b " style="left:229.60px;top:836.30px;width:107.00px;height:60.00px;border-radius:5px;overflow:hidden"><svg width="107" height="60" viewBox="0 0 107 60" style="position:absolute;left:0;top:0">
<defs><linearGradient id="p4a" x1="0" y1="0" x2="0" y2="1"><stop offset="0" stop-color="#f3eddd"/><stop offset=".45" stop-color="#f6ecd2"/><stop offset="1" stop-color="#f8e2b2"/></linearGradient>
<linearGradient id="p4w" x1="0" y1="0" x2="1" y2="0"><stop offset="0" stop-color="#3774a8"/><stop offset=".42" stop-color="#66a69c"/><stop offset="1" stop-color="#e4e4bc" stop-opacity="0"/></linearGradient>
<linearGradient id="p4m" x1="0" y1="0" x2="0" y2="1"><stop offset="0" stop-color="#ee9744"/><stop offset="1" stop-color="#f6dca8" stop-opacity=".15"/></linearGradient>
<radialGradient id="p4o"><stop offset="0" stop-color="#e88d33"/><stop offset=".55" stop-color="#eda95a" stop-opacity=".75"/><stop offset="1" stop-color="#f2c88e" stop-opacity="0"/></radialGradient>
<filter id="p4f" x="-5%" y="-5%" width="110%" height="110%"><feGaussianBlur stdDeviation=".4"/></filter></defs>
<rect width="107" height="60" fill="url(#p4a)"/>
<g filter="url(#p4f)">
<ellipse cx="4" cy="2.5" rx="13" ry="8.5" fill="url(#p4o)"/>
<ellipse cx="2" cy="16" rx="8" ry="9" fill="url(#p4o)" opacity=".75"/>
<ellipse cx="5" cy="29" rx="9" ry="6" fill="url(#p4o)" opacity=".55"/>
<ellipse cx="20" cy="36" rx="16" ry="5" fill="url(#p4o)" opacity=".3"/>
<path d="M0 42 C5 40 10 45 18 46 C28 47.5 36 52 46 55 L56 60 H0 Z" fill="url(#p4w)" opacity=".7"/>
<path d="M0 48.5 C6 47 11 52 18 53.5 C23 55 26 58 29 60 H0 Z" fill="#3a78ab" opacity=".85"/>
<path d="M92 36 C93.5 27 96 19 98.8 17.6 C103 18.4 106 23 107 28 V40 H92 Z" fill="url(#p4m)" opacity=".8"/>
<path d="M93 17.9 A5.4 5.4 0 0 1 103.8 17.9 Z" fill="#e9592f"/>
<path d="M95 52 C99 48.5 103 49 107 51 V60 H93 Z" fill="#ebb444"/>
<text x="11.4" y="9.5" font-size="3.5" font-weight="700" fill="#7a6a4c" font-family="Liberation Sans,Noto Sans CJK SC,sans-serif">2025乙巳年</text>
<text x="8" y="25.4" font-size="14.4" font-weight="600" fill="#241c16" font-family="Liberation Serif,Noto Serif CJK SC,serif" textLength="59" lengthAdjust="spacingAndGlyphs">五运六气</text>
<g fill="#d63a2c"><circle cx="14.4" cy="35.7" r="4"/><circle cx="24.2" cy="35.7" r="4"/><circle cx="34" cy="35.7" r="4"/><circle cx="43.8" cy="35.7" r="4"/><circle cx="53.4" cy="35.7" r="4"/></g>
<g font-size="5.4" font-weight="700" fill="#ffe6bc" font-family="Liberation Serif,Noto Serif CJK SC,serif" text-anchor="middle"><text x="14.4" y="37.7">掌</text><text x="24.2" y="37.7">握</text><text x="34" y="37.7">养</text><text x="43.8" y="37.7">生</text><text x="53.4" y="37.7">法</text></g>
<rect x="10.6" y="40.9" width="15.2" height="7" rx="1" fill="#d43a2c"/>
<text x="11.6" y="46.4" font-size="5" font-weight="700" fill="#fff" font-family="Liberation Sans,Noto Sans CJK SC,sans-serif" textLength="13" lengthAdjust="spacingAndGlyphs">线上</text>
<text x="27.4" y="46.5" font-size="5.2" font-weight="700" fill="#c78a30" font-family="Liberation Serif,Noto Serif CJK SC,serif" textLength="26" lengthAdjust="spacing">小班讲座</text>
<path d="M59.5 60 C60 50 61.5 41.5 65.5 36.6 C68 34 73 32.6 77 30.4 H88 C92 32.6 98 34 100.5 36.6 C104 41.5 105.5 50 106 60 Z" fill="#191a1d"/>
<path d="M78.2 23 H86.2 V30.6 L82.2 34 L78.2 30.6 Z" fill="#d8a482"/>
<ellipse cx="82.2" cy="17.6" rx="7.1" ry="8.7" fill="#e6b795"/>
<path d="M74.6 17.4 C73.2 8.2 77.6 4.6 82.4 4.7 C88 4.9 91 9.4 89.8 17.4 C88.9 13 86.6 11.6 82.4 11.7 C78.4 11.8 75.7 13.2 74.6 17.4 Z" fill="#151517"/>
<path d="M76.4 17.2 H81 M83.4 17.2 H88" stroke="#3a2e2a" stroke-width="1.1" fill="none"/>
<path d="M78.4 29.6 L82.2 33.4 L86 29.6 L87 32 L82.2 36 L77.4 32 Z" fill="#2b2c30"/>
<path d="M81.2 32.6 L82.2 34.8 L83.2 32.6 Z" fill="#f1ede6"/>
<path d="M71 58 l4.5 -3 l3.6 1.8 l4.4 -2.2 l3.8 2.6 l3 -1 v3.8 h-19.3 Z" fill="#e2ad3a"/>
</g>
</svg></div>
<div class="t " style="left:345.00px;top:856.10px;color:#3c3f45">计重退补差价</div>
<div class="t red" style="left:347.50px;top:878.00px;">¥<i class="g"></i>0.20</div>
<div class="t " style="left:480.00px;top:865.10px;color:#3c3f45">实物商品</div>
<div class="t" style="left:592px;width:200px;text-align:center;top:865.4px;color:#3c3f45">1<svg style="position:static;display:inline-block;vertical-align:middle;margin-left:2.5px;margin-top:-3px" width="11" height="7" viewBox="0 0 11 7" fill="none" stroke="#33363c" stroke-width="1.3" stroke-linecap="round" stroke-linejoin="round"><path d="M1 1 L5.5 5.4 L10 1"/></svg></div>
<div class="b " style="left:830.50px;top:864.30px;width:5.40px;height:5.40px;background:#56c223;border-radius:50%"></div>
<div class="t " style="left:841.00px;top:866.30px;color:#3c3f45">正常</div>
<div class="t " style="left:1080.50px;top:865.10px;color:#3c3f45">肉蛋专区<span class="blue" style="margin-left:8px">编辑</span></div>
<div class="t " style="left:1438.00px;top:865.10px;color:#3c3f45">2025-01-22 18:33:40</div>
<div class="t blue" style="left:1803.00px;top:865.10px;">修改</div>
<div class="t blue" style="left:1843.00px;top:865.10px;">移除</div>
<div class="b " style="left:184.00px;top:986.40px;width:1699.00px;height:1.00px;background:#edeff3"></div>
<div class="b cb" style="left:200.00px;top:939.90px;width:14.00px;height:14.00px;"></div>
<div class="b " style="left:229.60px;top:917.30px;width:107.00px;height:60.00px;border-radius:5px;overflow:hidden"><svg width="107" height="60" viewBox="0 0 107 60" style="position:absolute;left:0;top:0">
<defs><linearGradient id="p5a" x1="0" y1="0" x2="0" y2="1"><stop offset="0" stop-color="#f3eddd"/><stop offset=".45" stop-color="#f6ecd2"/><stop offset="1" stop-color="#f8e2b2"/></linearGradient>
<linearGradient id="p5w" x1="0" y1="0" x2="1" y2="0"><stop offset="0" stop-color="#3774a8"/><stop offset=".42" stop-color="#66a69c"/><stop offset="1" stop-color="#e4e4bc" stop-opacity="0"/></linearGradient>
<linearGradient id="p5m" x1="0" y1="0" x2="0" y2="1"><stop offset="0" stop-color="#ee9744"/><stop offset="1" stop-color="#f6dca8" stop-opacity=".15"/></linearGradient>
<radialGradient id="p5o"><stop offset="0" stop-color="#e88d33"/><stop offset=".55" stop-color="#eda95a" stop-opacity=".75"/><stop offset="1" stop-color="#f2c88e" stop-opacity="0"/></radialGradient>
<filter id="p5f" x="-5%" y="-5%" width="110%" height="110%"><feGaussianBlur stdDeviation=".4"/></filter></defs>
<rect width="107" height="60" fill="url(#p5a)"/>
<g filter="url(#p5f)">
<ellipse cx="4" cy="2.5" rx="13" ry="8.5" fill="url(#p5o)"/>
<ellipse cx="2" cy="16" rx="8" ry="9" fill="url(#p5o)" opacity=".75"/>
<ellipse cx="5" cy="29" rx="9" ry="6" fill="url(#p5o)" opacity=".55"/>
<ellipse cx="20" cy="36" rx="16" ry="5" fill="url(#p5o)" opacity=".3"/>
<path d="M0 42 C5 40 10 45 18 46 C28 47.5 36 52 46 55 L56 60 H0 Z" fill="url(#p5w)" opacity=".7"/>
<path d="M0 48.5 C6 47 11 52 18 53.5 C23 55 26 58 29 60 H0 Z" fill="#3a78ab" opacity=".85"/>
<path d="M92 36 C93.5 27 96 19 98.8 17.6 C103 18.4 106 23 107 28 V40 H92 Z" fill="url(#p5m)" opacity=".8"/>
<path d="M93 17.9 A5.4 5.4 0 0 1 103.8 17.9 Z" fill="#e9592f"/>
<path d="M95 52 C99 48.5 103 49 107 51 V60 H93 Z" fill="#ebb444"/>
<text x="11.4" y="9.5" font-size="3.5" font-weight="700" fill="#7a6a4c" font-family="Liberation Sans,Noto Sans CJK SC,sans-serif">2025乙巳年</text>
<text x="8" y="25.4" font-size="14.4" font-weight="600" fill="#241c16" font-family="Liberation Serif,Noto Serif CJK SC,serif" textLength="59" lengthAdjust="spacingAndGlyphs">五运六气</text>
<g fill="#d63a2c"><circle cx="14.4" cy="35.7" r="4"/><circle cx="24.2" cy="35.7" r="4"/><circle cx="34" cy="35.7" r="4"/><circle cx="43.8" cy="35.7" r="4"/><circle cx="53.4" cy="35.7" r="4"/></g>
<g font-size="5.4" font-weight="700" fill="#ffe6bc" font-family="Liberation Serif,Noto Serif CJK SC,serif" text-anchor="middle"><text x="14.4" y="37.7">掌</text><text x="24.2" y="37.7">握</text><text x="34" y="37.7">养</text><text x="43.8" y="37.7">生</text><text x="53.4" y="37.7">法</text></g>
<rect x="10.6" y="40.9" width="15.2" height="7" rx="1" fill="#d43a2c"/>
<text x="11.6" y="46.4" font-size="5" font-weight="700" fill="#fff" font-family="Liberation Sans,Noto Sans CJK SC,sans-serif" textLength="13" lengthAdjust="spacingAndGlyphs">线上</text>
<text x="27.4" y="46.5" font-size="5.2" font-weight="700" fill="#c78a30" font-family="Liberation Serif,Noto Serif CJK SC,serif" textLength="26" lengthAdjust="spacing">小班讲座</text>
<path d="M59.5 60 C60 50 61.5 41.5 65.5 36.6 C68 34 73 32.6 77 30.4 H88 C92 32.6 98 34 100.5 36.6 C104 41.5 105.5 50 106 60 Z" fill="#191a1d"/>
<path d="M78.2 23 H86.2 V30.6 L82.2 34 L78.2 30.6 Z" fill="#d8a482"/>
<ellipse cx="82.2" cy="17.6" rx="7.1" ry="8.7" fill="#e6b795"/>
<path d="M74.6 17.4 C73.2 8.2 77.6 4.6 82.4 4.7 C88 4.9 91 9.4 89.8 17.4 C88.9 13 86.6 11.6 82.4 11.7 C78.4 11.8 75.7 13.2 74.6 17.4 Z" fill="#151517"/>
<path d="M76.4 17.2 H81 M83.4 17.2 H88" stroke="#3a2e2a" stroke-width="1.1" fill="none"/>
<path d="M78.4 29.6 L82.2 33.4 L86 29.6 L87 32 L82.2 36 L77.4 32 Z" fill="#2b2c30"/>
<path d="M81.2 32.6 L82.2 34.8 L83.2 32.6 Z" fill="#f1ede6"/>
<path d="M71 58 l4.5 -3 l3.6 1.8 l4.4 -2.2 l3.8 2.6 l3 -1 v3.8 h-19.3 Z" fill="#e2ad3a"/>
</g>
</svg></div>
<div class="t " style="left:345.00px;top:937.10px;color:#3c3f45">计重退差价</div>
<div class="t red" style="left:347.50px;top:959.00px;">¥<i class="g"></i>0.20</div>
<div class="t " style="left:480.00px;top:946.10px;color:#3c3f45">实物商品</div>
<div class="t" style="left:592px;width:200px;text-align:center;top:946.4px;color:#3c3f45">1<svg style="position:static;display:inline-block;vertical-align:middle;margin-left:2.5px;margin-top:-3px" width="11" height="7" viewBox="0 0 11 7" fill="none" stroke="#33363c" stroke-width="1.3" stroke-linecap="round" stroke-linejoin="round"><path d="M1 1 L5.5 5.4 L10 1"/></svg></div>
<div class="b " style="left:830.50px;top:945.30px;width:5.40px;height:5.40px;background:#56c223;border-radius:50%"></div>
<div class="t " style="left:841.00px;top:947.30px;color:#3c3f45">正常</div>
<div class="t " style="left:1080.50px;top:946.10px;color:#3c3f45">肉蛋专区<span class="blue" style="margin-left:8px">编辑</span></div>
<div class="t " style="left:1438.00px;top:946.10px;color:#3c3f45">2025-01-22 18:32:32</div>
<div class="t blue" style="left:1803.00px;top:946.10px;">修改</div>
<div class="t blue" style="left:1843.00px;top:946.10px;">移除</div>
</div>
<div style="position:absolute;left:1272px;top:0;width:4px;height:660px;background:#e9eaed"></div>
<div style="position:absolute;left:1272.1px;top:0;width:3.9px;height:469.3px;background:linear-gradient(90deg,#b2b3b7,#a3a4a8)"></div>
<div style="position:absolute;left:0;top:658.5px;width:1272px;height:1.5px;background:#e6e6e8"></div>
<div style="position:absolute;left:0;top:658.5px;width:833px;height:1.5px;background:linear-gradient(#b4b4b6,#9c9c9e)"></div>
</body></html>
